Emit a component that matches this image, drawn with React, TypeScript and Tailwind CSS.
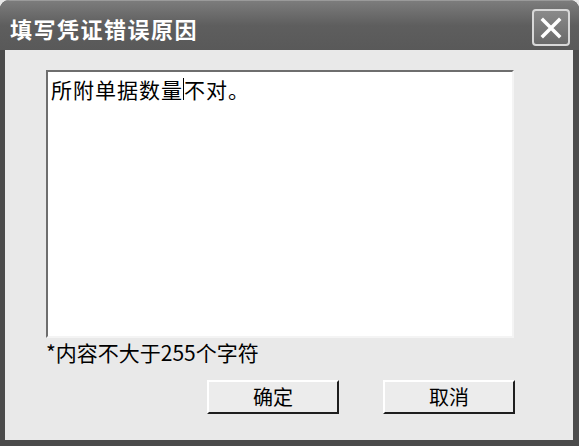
export default function App() {
  const cjk = { fontFamily: '"Noto Sans CJK SC", "Noto Sans", sans-serif' };

  return (
    <div className="w-[579px] h-[446px] bg-[#e9e9e9]" style={cjk}>
      <div className="flex flex-col w-full h-full bg-[#4b4b4b] rounded-t-[9px] overflow-hidden">
        {/* Title bar */}
        <div className="flex items-start justify-between h-[50px] bg-gradient-to-b from-[#7c7c7c] via-[#5e5e5e] to-[#595959] border-t border-[#9a9a9a]">
          <span className="ml-[10px] mt-[13px] text-[22px] leading-[28px] font-bold text-white tracking-[1.5px]">
            填写凭证错误原因
          </span>
          <div className="mt-[8px] mr-[9px] w-[38px] h-[37px] rounded-[4px] border-2 border-[#d8d8d8] bg-gradient-to-b from-[#8a8a8a] to-[#6a6a6a] flex items-center justify-center">
            <svg width="22" height="22" viewBox="0 0 22 22">
              <path d="M3 3 L19 19 M19 3 L3 19" stroke="#ffffff" strokeWidth="3.5" strokeLinecap="square" />
            </svg>
          </div>
        </div>

        {/* Body */}
        <div className="flex-1 mx-[5px] mr-[6px] mb-[6px] bg-[#e9e9e9] flex flex-col pl-[41px]">
          <div className="mt-[20px] w-[468px] h-[268px] bg-white border-t-2 border-l-2 border-[#6e6e6e] border-r-2 border-b-2 border-r-[#f4f4f4] border-b-[#f4f4f4]">
            <div className="pl-[3px] pt-[4px] text-[21px] leading-[26px] text-black flex items-center tracking-[1px]">
              <span>所附单据数量</span>
              <span className="inline-block w-[1px] h-[22px] bg-black" />
              <span>不对。</span>
            </div>
          </div>
          <div className="mt-[1px] text-[21px] leading-[27px] text-black">*内容不大于255个字符</div>
          <div className="mt-[14px] flex gap-[44px] pl-[161px]">
            <button className="w-[132px] h-[34px] bg-[#ececec] border-t-2 border-l-2 border-white border-r-2 border-b-2 border-r-[#1e1e1e] border-b-[#1e1e1e] text-[20px] leading-[26px] text-black">
              确定
            </button>
            <button className="w-[132px] h-[34px] bg-[#ececec] border-t-2 border-l-2 border-white border-r-2 border-b-2 border-r-[#1e1e1e] border-b-[#1e1e1e] text-[20px] leading-[26px] text-black">
              取消
            </button>
          </div>
        </div>
      </div>
    </div>
  );
}
